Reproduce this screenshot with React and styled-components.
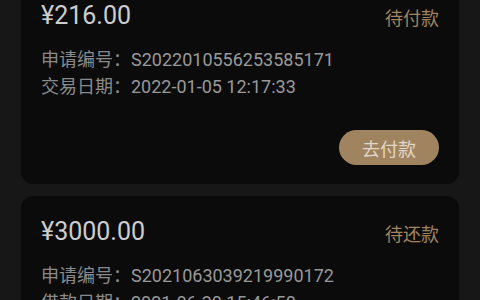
import styled, { createGlobalStyle } from "styled-components";

const GlobalStyle = createGlobalStyle`
  html, body {
    margin: 0;
    padding: 0;
    background: #171717;
  }
  body {
    font-family: Roboto, "Noto Sans CJK SC", sans-serif;
    overflow: hidden;
  }
`;

const orders = [
  {
    amount: "¥216.00",
    status: "待付款",
    rows: [
      ["申请编号", "S2022010556253585171"],
      ["交易日期", "2022-01-05 12:17:33"],
    ],
    action: "去付款",
  },
  {
    amount: "¥3000.00",
    status: "待还款",
    rows: [
      ["申请编号", "S2021063039219990172"],
      ["借款日期", "2021-06-30 15:46:50"],
    ],
    action: "去还款",
  },
];

const App = () => {
  return (
    <>
      <GlobalStyle />
      <List>
        {orders.map((order) => (
          <Card key={order.rows[0][1]}>
            <CardHead>
              <Amount>{order.amount}</Amount>
              <Status>{order.status}</Status>
            </CardHead>
            <Info>
              {order.rows.map(([label, value]) => (
                <InfoRow key={label}>
                  <Label>{label}：</Label>
                  <Value>{value}</Value>
                </InfoRow>
              ))}
            </Info>
            <Actions>
              <PayButton>{order.action}</PayButton>
            </Actions>
          </Card>
        ))}
      </List>
    </>
  );
};

// list is scrolled a little, the first card starts above the viewport
const List = styled.div`
  display: flex;
  flex-direction: column;
  gap: 12px;
  padding: 0 21px;
  margin-top: -20px;
`;

const Card = styled.div`
  background: #0b0b0b;
  border-radius: 12px;
  padding: 20px 20px 19px;
`;

const CardHead = styled.div`
  display: flex;
  justify-content: space-between;
  align-items: center;
  height: 30px;
`;

const Amount = styled.div`
  font-size: 25px;
  color: #cdcdcd;
`;

const Status = styled.div`
  font-size: 18px;
  color: #a0845f;
  margin-top: 3px;
`;

const Info = styled.div`
  margin-top: 16px;
`;

const InfoRow = styled.div`
  display: flex;
  font-size: 18px;
  line-height: 27px;
`;

const Label = styled.span`
  color: #8a8a8a;
`;

const Value = styled.span`
  color: #999999;
`;

const Actions = styled.div`
  display: flex;
  justify-content: flex-end;
  margin-top: 30px;
`;

const PayButton = styled.button`
  width: 100px;
  height: 35px;
  border: none;
  border-radius: 18px;
  background: #a0845f;
  color: #e2d7c8;
  font-family: Roboto, "Noto Sans CJK SC", sans-serif;
  font-size: 18px;
  padding: 0;
`;

export default App;
